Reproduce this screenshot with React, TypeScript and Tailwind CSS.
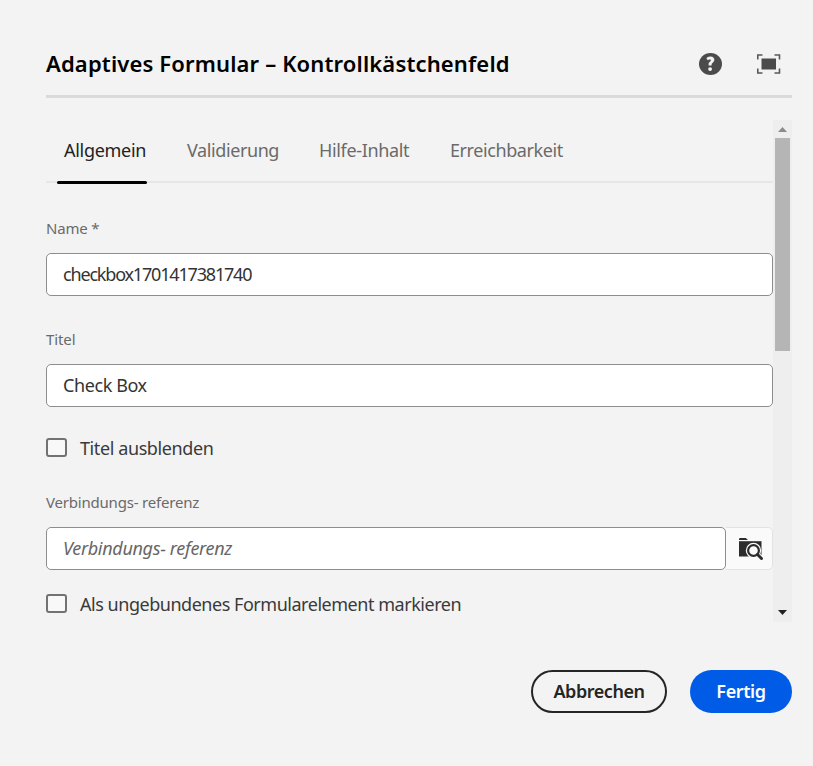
import type { ReactNode } from "react";

function HelpIcon() {
  return (
    <svg width="24" height="24" viewBox="0 0 24 24" className="block">
      <ellipse cx="11.500" cy="12" rx="11.5" ry="11" fill="#4b4b4b" />
      <path
        d="M7.700 5.900C8.800 5.100 10.100 4.700 11.500 4.700c2.300 0 3.600 1.200 3.600 3 0 1.400-.8 2.200-1.600 3-.8.7-1.100 1.100-1.100 2v.6H9.800v-.9c0-1.400.5-2 1.300-2.700.7-.7 1-1 1-1.600 0-.6-.4-.9-1.100-.9-.8 0-1.600.3-2.400.8z"
        fill="#f5f5f5"
        stroke="#f5f5f5"
        strokeWidth="0.4"
      />
      <circle cx="11.100" cy="17.100" r="1.900" fill="#f5f5f5" />
    </svg>
  );
}

function FullscreenIcon() {
  return (
    <svg width="24" height="20" viewBox="0 0 24 20" className="block">
      <rect x="4.500" y="4.500" width="14.500" height="11" fill="#4b4b4b" />
      <path
        d="M.8 5.500V1H5.500M17.500 1h5v4.500M22.500 14.500V19h-5M5.500 19H.8v-4.500"
        fill="none"
        stroke="#5a5a5a"
        strokeWidth="1.600"
      />
    </svg>
  );
}

function FolderSearchIcon() {
  return (
    <svg width="26" height="24" viewBox="0 0 26 24" className="block">
      <path d="M1 3V2.200Q1 1 2.200 1H7.800L10 3z" fill="#2c2c2c" />
      <path d="M1 4.200h22.500V19.500H1z" fill="#2c2c2c" />
      <path d="M14 18h11v3H14z" fill="#fafafa" />
      <circle cx="15.500" cy="13.500" r="7.700" fill="#fafafa" />
      <path d="M19 17l5 5" stroke="#fafafa" strokeWidth="5" />
      <circle cx="15.500" cy="13.500" r="5.400" fill="#fafafa" stroke="#2c2c2c" strokeWidth="2.200" />
      <path d="M19.500 17.500l4 4" stroke="#2c2c2c" strokeWidth="3" strokeLinecap="round" />
    </svg>
  );
}

function Tab({ children, className }: { children: ReactNode; className: string }) {
  return (
    <button className={`relative flex h-full items-center pb-px text-[18px] leading-6 ${className}`}>
      {children}
    </button>
  );
}

function Checkbox({ children, className }: { children: ReactNode; className: string }) {
  return (
    <label className={`flex h-[22px] items-center whitespace-nowrap text-[18px] text-[#3a3a3a] ${className}`}>
      <span className="mr-[13px] mb-px h-[19px] w-[21px] shrink-0 rounded-[3px] border-2 border-[#727272] bg-[#f8f8f8]" />
      {children}
    </label>
  );
}

export default function App() {
  return (
    <div className="flex h-[766px] w-[813px] flex-col bg-[#f3f3f3] pr-[21px] pl-[46px] font-['Noto_Sans',sans-serif]">
      <header className="flex h-[98px] items-center border-b-[3px] border-[#dadada] pt-[33px]">
        <h1 className="flex-1 pb-[2px] text-[22px] leading-[30px] font-semibold tracking-[0.15px] whitespace-nowrap text-black">
          Adaptives Formular – Kontrollkästchenfeld
        </h1>
        <button className="mr-[34px]"><HelpIcon /></button>
        <button className="mr-[11px]"><FullscreenIcon /></button>
      </header>

      <div className="mt-[22px] flex h-[502px]">
        <main className="flex h-full w-[727px] shrink-0 flex-col">
          <nav className="flex h-[63px] shrink-0 border-b-2 border-[#e6e6e6] text-[#6a6a6a]">
            <Tab className="ml-[18px] w-[82px] tracking-[-0.3px] text-[#222]">
              Allgemein
              <span className="absolute top-[61px] left-[-7px] h-[3px] w-[90px] rounded-full bg-black" />
            </Tab>
            <Tab className="ml-[41px] w-[92px] tracking-[-0.4px]">Validierung</Tab>
            <Tab className="ml-[40px] w-[91px] tracking-[-0.35px]">Hilfe-Inhalt</Tab>
            <Tab className="ml-[40px] w-[114px] tracking-[-0.42px]">Erreichbarkeit</Tab>
          </nav>

          <label className="mt-[35px] h-[20px] text-[15px] leading-5 tracking-[-0.2px] text-[#6a6a6a]">Name *</label>
          <input
            readOnly
            value="checkbox1701417381740"
            className="mt-[15px] h-[43px] w-full shrink-0 rounded-[5px] border border-[#8d8d8d] bg-white px-[16px] pb-[2px] text-[18px] tracking-[-1.18px] text-[#333] outline-none"
          />
          <label className="mt-[33px] h-[20px] text-[15px] leading-5 tracking-[-0.1px] text-[#6a6a6a]">Titel</label>
          <input
            readOnly
            value="Check Box"
            className="mt-[15px] h-[43px] w-full shrink-0 rounded-[5px] border border-[#8d8d8d] bg-white px-[16px] pb-[2px] text-[18px] tracking-[-0.4px] text-[#333] outline-none"
          />
          <Checkbox className="mt-[30px] tracking-[-0.4px]">Titel ausblenden</Checkbox>

          <label className="mt-[33px] h-[20px] text-[15px] leading-5 tracking-[-0.2px] text-[#6a6a6a]">
            Verbindungs- referenz
          </label>
          <div className="mt-[15px] flex h-[43px] shrink-0">
            <input
              readOnly
              placeholder="Verbindungs- referenz"
              className="h-full w-[680px] rounded-[5px] border border-[#8d8d8d] bg-white px-[16px] pb-[2px] text-[18px] tracking-[-0.32px] italic outline-none placeholder:text-[#666]"
            />
            <button className="flex flex-1 items-center justify-center rounded-r-[5px] border border-l-0 border-[#e2e2e2] bg-[#fafafa] pt-px pl-[3px]">
              <FolderSearchIcon />
            </button>
          </div>
          <Checkbox className="mt-[23px] tracking-[-0.47px]">Als ungebundenes Formularelement markieren</Checkbox>
        </main>

        <aside className="flex w-[19px] flex-col items-center bg-[#eeeeee]">
          <svg width="9" height="5" viewBox="0 0 9 5" className="mt-[7px] block">
            <path d="M0 5L4.500 0L9 5z" fill="#8b8b8b" />
          </svg>
          <div className="mt-[6px] h-[213px] w-[15px] bg-[#b5b5b5]" />
          <svg width="9" height="5" viewBox="0 0 9 5" className="mt-auto mb-[7px] block">
            <path d="M0 0L4.500 5L9 0z" fill="#222" />
          </svg>
        </aside>
      </div>

      <footer className="mt-[48px] flex h-[43px] justify-end gap-[23px] text-[18px] font-semibold">
        <button className="w-[136px] rounded-full border-2 border-[#252525] tracking-[-0.45px] text-[#252525]">Abbrechen</button>
        <button className="w-[102px] rounded-full bg-[#005ce6] tracking-[-0.4px] text-white">Fertig</button>
      </footer>
    </div>
  );
}
